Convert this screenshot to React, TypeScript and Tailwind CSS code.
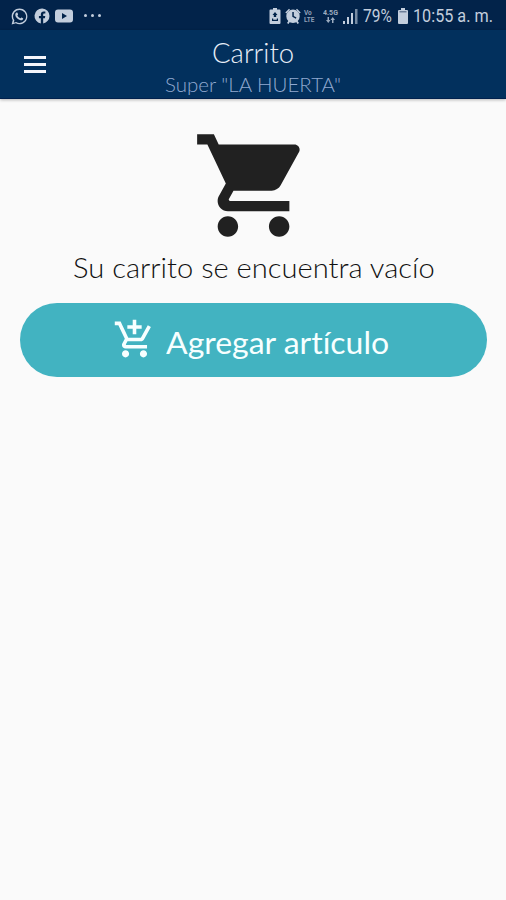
import type { ReactNode } from "react";

function Glyph({ className, children }: { className: string; children: ReactNode }) {
  return (
    <svg viewBox="0 0 24 24" fill="currentColor" className={`shrink-0 ${className}`}>
      {children}
    </svg>
  );
}

function StatusBar() {
  return (
    <div className="flex h-[30px] items-center bg-[#02234a] pt-[2px] font-['Roboto',sans-serif] text-[#c3cedd]">
      <Glyph className="ml-[10px] size-[19px]">
        <path d="M12.04 2c-5.46 0-9.91 4.45-9.91 9.91 0 1.75.46 3.45 1.32 4.95L2.05 22l5.25-1.38c1.45.79 3.08 1.21 4.74 1.21 5.46 0 9.91-4.45 9.91-9.91S17.5 2 12.04 2zm0 18.1c-1.5 0-2.9-.4-4.2-1.1l-3.1.8.8-3a8.2 8.2 0 1 1 6.5 3.3z" />
        <path d="M7 8.2c.3-.8 1.2-1.3 2-1.1.4.1 1.2 2 1.2 2.4 0 .5-.8 1-.8 1.4.8 1.600 2 2.700 3.600 3.400.5.100.9-1.100 1.400-1.100.4 0 2.300.9 2.300 1.200 0 1.500-1.500 2.500-2.900 2.300-3.600-.5-6.900-3.900-7.100-6.700 0-.7 0-1.300.3-1.800z" />
      </Glyph>
      <Glyph className="ml-[4px] size-[18px]">
        <path d="M22 12a10 10 0 1 0-11.56 9.880V14.900H7.900V12h2.540V9.800c0-2.510 1.490-3.890 3.780-3.890 1.090 0 2.240.2 2.240.2v2.460h-1.260c-1.240 0-1.630.77-1.630 1.560V12h2.770l-.44 2.900h-2.330v6.980A10 10 0 0 0 22 12z" />
      </Glyph>
      <svg viewBox="0 0 18 14" className="ml-[4px] h-[14px] w-[18px] shrink-0" fill="currentColor">
        <path fillRule="evenodd" d="M3 .5h12q3 0 3 3v7q0 3-3 3H3q-3 0-3-3v-7q0-3 3-3zM7 4v6l5-3z" />
      </svg>
      <div className="-mt-[2px] ml-[11px] flex gap-[4px]">
        <i className="size-[3px] rounded-full bg-current" />
        <i className="size-[3px] rounded-full bg-current" />
        <i className="size-[3px] rounded-full bg-current" />
      </div>
      <svg viewBox="0 0 12 16" className="ml-[168px] h-[16px] w-[12px] shrink-0" fill="currentColor">
        <path fillRule="evenodd" d="M4 0h4v1.500h2.500q1 0 1 1V15q0 1-1 1h-9q-1 0-1-1V2.500q0-1 1-1H4zM6 4 3.500 7h1.300v2h2.400V7h1.300zM3 10.500v2.500h6v-2.500H7.800v1.300H4.200v-1.300z" />
      </svg>
      <svg viewBox="0 0 16 16" className="ml-[4px] h-[16px] w-[16px] shrink-0" fill="currentColor">
        <path fillRule="evenodd" d="M8 1.500a6.700 6.700 0 1 1 0 13.400 6.700 6.700 0 0 1 0-13.400zM7.300 4v4.800l3.500 2 .7-1.200-2.700-1.500V4z" />
        <path d="M.3 4.500 4 .8l1 1L1.500 5.500zM15.700 4.500 12 .8l-1 1 3.500 3.700zM2 15l2-3 1.500 1L3.500 16zM14 15l-2-3-1.500 1 2 3z" />
      </svg>
      <div className="ml-[3px] w-[12px] text-[6.500px] leading-[8px] font-bold text-[#8f9fb6]">
        <div className="h-[7px]">Vo</div>
        <div className="h-[7px]">LTE</div>
      </div>
      <div className="ml-[6px] flex w-[17px] flex-col items-center opacity-80">
        <div className="text-[7px] leading-[8px] font-bold whitespace-nowrap">4.5G</div>
        <svg viewBox="0 0 9 6" className="h-[6px] w-[9px]" fill="currentColor">
          <path d="M1.500 0h1.500v3H4.500L2.250 6 0 3h1.500zM6 6h1.500V3H9L6.750 0 4.500 3H6z" />
        </svg>
      </div>
      <svg viewBox="0 0 15 15" className="ml-[4px] h-[15px] w-[15px] shrink-0" fill="currentColor">
        <path d="M0 12h2v3H0zM4 8h2v7H4zM8 4h2v11H8z" />
        <path opacity=".6" d="M12 0h2.500v15H12z" />
      </svg>
      <div className="ml-[5px] w-[30px] shrink-0 text-[18px] leading-[20px] whitespace-nowrap">
        <span className="inline-block origin-left scale-x-[0.86]">79%</span>
      </div>
      <svg viewBox="0 0 10 16" className="ml-[5px] h-[16px] w-[10px] shrink-0" fill="currentColor">
        <path d="M3 0h4v2h2q1 0 1 1v12q0 1-1 1H1q-1 0-1-1V3q0-1 1-1h2z" />
        <path fill="#6c7e98" d="M1.500 3h7v1.500h-7z" />
      </svg>
      <div className="ml-[5px] w-[80px] shrink-0 text-[18px] leading-[20px] whitespace-nowrap">
        <span className="inline-block origin-left scale-x-[0.9]">10:55 a. m.</span>
      </div>
    </div>
  );
}

function Header() {
  return (
    <header className="relative flex h-[69px] border-b border-[#00204d] bg-[#02305d] shadow-[0_1px_3px_rgba(0,0,0,0.28)]">
      <button aria-label="Menú" className="mt-[26px] ml-[24px] flex h-[17px] w-[22px] shrink-0 flex-col justify-between">
        <span className="h-[3px] w-full bg-[#f4f5fb]" />
        <span className="h-[3px] w-full bg-[#f4f5fb]" />
        <span className="h-[3px] w-full bg-[#f4f5fb]" />
      </button>
      <div className="ml-[119px] w-[178px] whitespace-nowrap">
        <h1 className="mt-[6px] ml-[47px] text-[27.500px] leading-[34px] font-light text-[#e8eef8]">Carrito</h1>
        <p className="mt-[1px] w-fit origin-left scale-x-[1.025] text-[20px] leading-[26px] font-light text-[#91a9d0]">
          Super "LA HUERTA"
        </p>
      </div>
    </header>
  );
}

export default function App() {
  return (
    <div className="flex h-[900px] w-[506px] flex-col overflow-hidden bg-[#fafafa] font-['Lato',sans-serif]">
      <StatusBar />
      <Header />
      <main className="flex flex-col">
        <Glyph className="mt-[25px] ml-[192px] size-[123px] text-[#212121]">
          <path d="M7 18c-1.100 0-1.990.9-1.990 2S5.900 22 7 22s2-.9 2-2-.9-2-2-2zM1 2v2h2l3.600 7.590-1.350 2.450c-.16.28-.25.61-.25.96 0 1.100.9 2 2 2h12v-2H7.420c-.14 0-.25-.11-.25-.25l.03-.12.900-1.630h7.450c.75 0 1.410-.41 1.750-1.030l3.580-6.490c.08-.14.12-.31.12-.48 0-.55-.45-1-1-1H5.210l-.94-2H1zm16 16c-1.100 0-1.990.9-1.990 2s.89 2 1.990 2 2-.9 2-2-.9-2-2-2z" />
        </Glyph>
        <p className="mt-[2px] ml-[73px] w-fit origin-left scale-x-[1.04] text-[28px] leading-[36px] font-light whitespace-nowrap text-[#111]">
          Su carrito se encuentra vacío
        </p>
        <button className="mt-[18px] ml-[20px] flex h-[74px] w-[467px] items-start rounded-full bg-[#42b3c1] text-[#f7ffff]">
          <Glyph className="mt-[15px] ml-[93px] size-[43px]">
            <path d="M11 9h2V6h3V4h-3V1h-2v3H8v2h3v3zm-4 9c-1.100 0-1.990.9-1.990 2S5.900 22 7 22s2-.9 2-2-.9-2-2-2zm10 0c-1.100 0-1.990.9-1.990 2s.89 2 1.990 2 2-.9 2-2-.9-2-2-2zm-9.830-3.250.03-.12.900-1.630h7.450c.75 0 1.410-.41 1.750-1.030l3.860-7.010L19.420 4h-.01l-1.100 2-2.760 5H8.530l-.13-.27L6.160 6l-.95-2-.94-2H1v2h2l3.600 7.590-1.350 2.450c-.16.28-.25.61-.25.96 0 1.100.9 2 2 2h12v-2H7.420c-.13 0-.25-.11-.25-.25z" />
          </Glyph>
          <span className="mt-[20px] ml-[10px] origin-left scale-x-[1.065] text-[30px] leading-[38px] font-normal whitespace-nowrap [font-variant-ligatures:none]">
            Agregar artículo
          </span>
        </button>
      </main>
    </div>
  );
}
